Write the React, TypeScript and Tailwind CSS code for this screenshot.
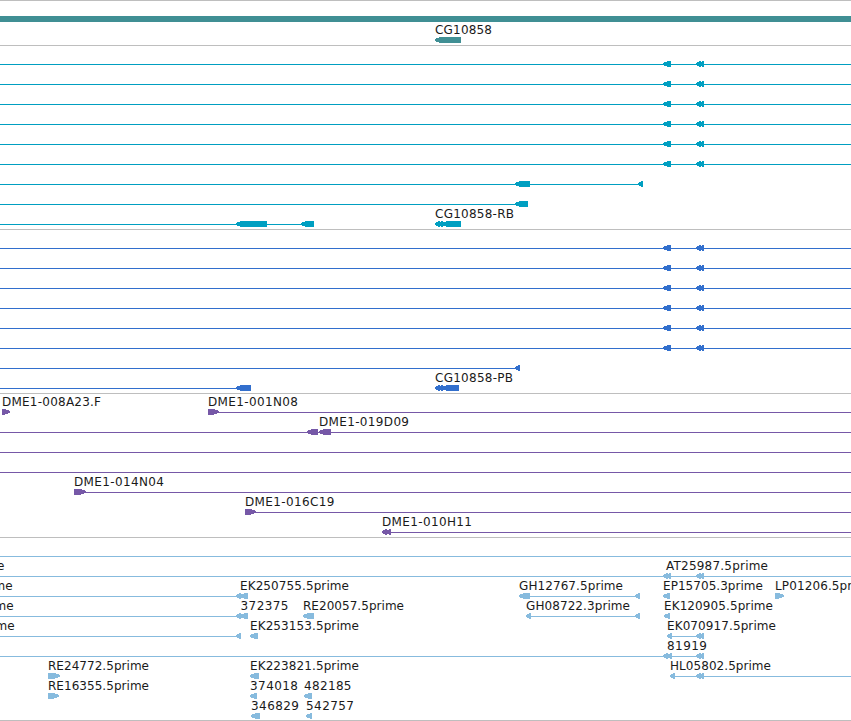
import React from "react";

// Left-pointing box, right-pointing box, stacked left arrowheads, connector line
type Mark =
  | { kind: "left" | "right" | "line"; from: number; to: number }
  | { kind: "stack"; tips: number[]; to: number };
type Label = { x: number; text: string; width?: number };
type Row = { marks: Mark[]; labels?: Label[] };

const left = (from: number, to: number): Mark => ({ kind: "left", from, to });
const right = (from: number, to: number): Mark => ({ kind: "right", from, to });
const line = (from: number, to: number): Mark => ({ kind: "line", from, to });
const stack = (tips: number[], to: number): Mark => ({ kind: "stack", tips, to });
const label = (x: number, text: string, width?: number): Label => ({ x, text, width });

const END = 851;

const sharedExons: Row = { marks: [line(0, END), left(663, 671), stack([696, 699], 704)] };

const transcripts: Row[] = [
  ...Array.from({ length: 6 }, () => sharedExons),
  { marks: [line(0, 638), left(515, 530), left(638, 643)] },
  { marks: [line(0, 515), left(515, 528)] },
  {
    marks: [line(0, 301), left(236, 267), left(301, 314), stack([435, 438, 442], 461)],
    labels: [label(435, "CG10858-RB", 79)],
  },
];

const proteins: Row[] = [
  ...Array.from({ length: 6 }, () => sharedExons),
  { marks: [line(0, 515), left(515, 520)] },
  {
    marks: [line(0, 236), left(236, 251), stack([435, 438, 442], 459)],
    labels: [label(435, "CG10858-PB", 78)],
  },
];

const clones: Row[] = [
  {
    marks: [right(2, 10), right(208, 219), line(219, END)],
    labels: [label(2, "DME1-008A23.F", 99), label(208, "DME1-001N08", 90)],
  },
  { marks: [line(0, END), left(307, 318), left(319, 331)], labels: [label(319, "DME1-019D09", 90)] },
  { marks: [line(0, END)] },
  { marks: [line(0, END)] },
  { marks: [right(74, 86), line(86, END)], labels: [label(74, "DME1-014N04", 90)] },
  { marks: [right(245, 256), line(256, END)], labels: [label(245, "DME1-016C19", 89.5)] },
  { marks: [stack([382, 386], 391), line(391, END)], labels: [label(382, "DME1-010H11", 90)] },
];

const ests: Row[] = [
  { marks: [line(0, END)] },
  {
    marks: [line(0, END), stack([663, 666], 671), stack([696, 699], 704)],
    labels: [label(-3, "e"), label(666, "AT25987.5prime", 102)],
  },
  {
    marks: [
      line(0, 240), stack([236, 240], 248), left(519, 530), line(530, 638), left(635, 640),
      left(663, 670), right(775, 784),
    ],
    labels: [
      label(-6.5, "me"), label(240, "EK250755.5prime", 109), label(519, "GH12767.5prime", 104),
      label(663, "EP15705.3prime", 100), label(775, "LP01206.5prime", 100),
    ],
  },
  {
    marks: [
      line(0, 240), stack([236, 240], 248), left(303, 314), left(526, 531), line(531, 638),
      left(635, 640), left(664, 670),
    ],
    labels: [
      label(-5.5, "me"), label(240.5, "372375", 48), label(303, "RE20057.5prime", 101),
      label(526, "GH08722.3prime", 104), label(664, "EK120905.5prime", 109),
    ],
  },
  {
    marks: [line(0, 238), left(236, 241), left(250, 258), left(667, 672), line(672, 697), stack([696, 699], 704)],
    labels: [label(-4.5, "me"), label(250, "EK253153.5prime", 109), label(667, "EK070917.5prime", 109)],
  },
  {
    marks: [line(0, 700), stack([663, 667], 672), stack([696, 699], 704)],
    labels: [label(667, "81919", 40)],
  },
  {
    marks: [right(48, 60), left(250, 259), left(670, 675), line(675, END), stack([696, 699], 704)],
    labels: [
      label(48, "RE24772.5prime", 101), label(250, "EK223821.5prime", 109),
      label(670, "HL05802.5prime", 101),
    ],
  },
  {
    marks: [right(48, 59), left(250, 257), left(304, 312)],
    labels: [label(48, "RE16355.5prime", 101), label(250, "374018", 48), label(304, "482185", 47.5)],
  },
  {
    marks: [left(251, 260), left(306, 312)],
    labels: [label(251, "346829", 48), label(306, "542757", 48)],
  },
];

function leftPoints(from: number, to: number) {
  const shoulder = Math.min(from + 6, to);
  return `${from},16 ${shoulder},13.8 ${to},14 ${to},20 ${shoulder},20.2 ${from},18`;
}

function MarkShape({ mark }: { mark: Mark }) {
  if (mark.kind === "line") return <rect x={mark.from} y={17} width={mark.to - mark.from} height={1} />;
  if (mark.kind === "left") return <polygon points={leftPoints(mark.from, mark.to)} />;
  if (mark.kind === "right") {
    const s = mark.to - 6;
    return <polygon points={`${mark.from},14 ${s},14 ${mark.to},16 ${mark.to},17.6 ${s},20 ${mark.from},20`} />;
  }
  return (
    <>
      {mark.tips.map((tip, i) => (
        <polygon key={tip} points={leftPoints(tip, i === mark.tips.length - 1 ? mark.to : tip + 5)} />
      ))}
    </>
  );
}

function TrackRow({ row }: { row: Row }) {
  return (
    <svg width={851} height={20} className="block shrink-0 overflow-visible">
      <g fill="currentColor" shapeRendering="crispEdges">
        {row.marks.map((mark, i) => <MarkShape key={i} mark={mark} />)}
      </g>
      {row.labels?.map((l) => (
        <text
          key={l.text}
          x={l.x}
          y={11}
          textLength={l.width}
          className="fill-[#1a1a1a] font-['DejaVu_Sans',sans-serif] text-[12px]"
        >
          {l.text}
        </text>
      ))}
    </svg>
  );
}

function Track({ rows, className }: { rows: Row[]; className: string }) {
  return (
    <section className={`flex flex-col border-b border-[#bebebe] ${className}`}>
      {rows.map((row, i) => <TrackRow key={i} row={row} />)}
    </section>
  );
}

export default function App() {
  return (
    <main className="flex h-[721px] w-[851px] flex-col overflow-hidden border-t border-[#bebebe] bg-white">
      <section className="flex flex-col border-b border-[#bebebe] pt-[15px] pb-[2px] text-[#408f94]">
        <div className="mb-px h-[6px] bg-current" />
        <TrackRow row={{ marks: [left(435, 461)], labels: [label(435, "CG10858", 57)] }} />
      </section>
      <Track rows={transcripts} className="pt-px pb-[2px] text-[#009fc1]" />
      <Track rows={proteins} className="pt-px pb-[2px] text-[#326fcd]" />
      <Track rows={clones} className="pt-px pb-[2px] text-[#7658a7]" />
      <Track rows={ests} className="pt-px pb-px text-[#87bbde]" />
    </main>
  );
}
